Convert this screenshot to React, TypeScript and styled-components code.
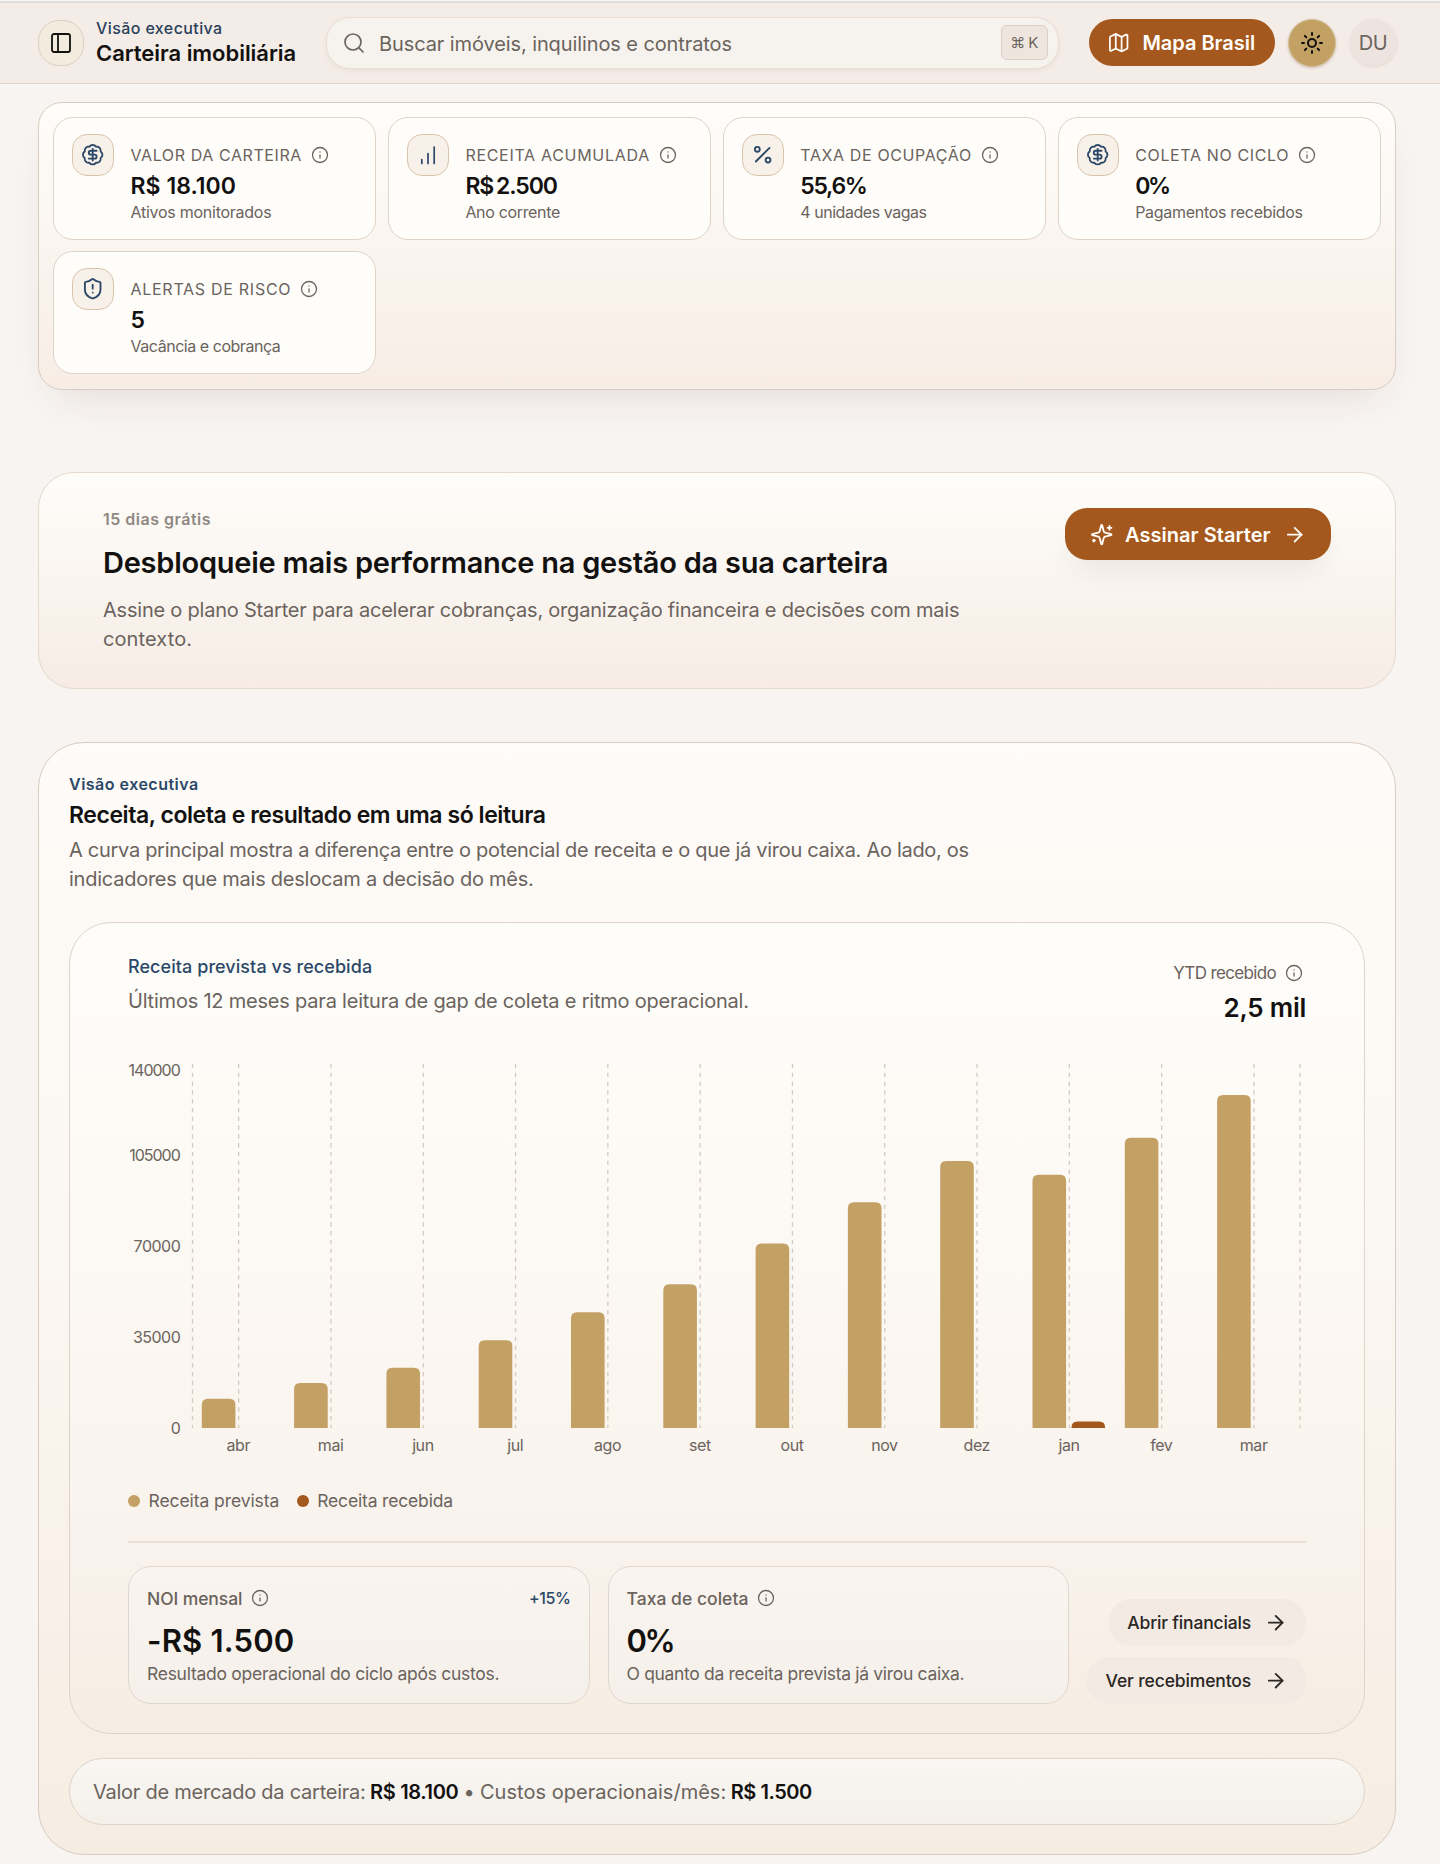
import React from 'react';
import styled, { createGlobalStyle, css } from 'styled-components';
import {
  ArrowRight,
  BadgeDollarSign,
  Info,
  Map as MapIcon,
  PanelLeft,
  Percent,
  Search,
  ShieldAlert,
  Sun,
} from 'lucide-react';

const color = {
  page: '#f8f4f1',
  ink: '#12110f',
  muted: '#6b635d',
  navy: '#2b4868',
  brand: '#a5581d',
  gold: '#c3a064',
  line: '#dfd4ca',
};

const GlobalStyle = createGlobalStyle`
  *, *::before, *::after { box-sizing: border-box; }
  body {
    margin: 0;
    background: ${color.page};
    color: ${color.ink};
    font-family: Inter, "Noto Sans", sans-serif;
    -webkit-font-smoothing: antialiased;
  }
  p, h1, h2, h3 { margin: 0; }
  button { font-family: inherit; cursor: pointer; }
`;

type Tracking = { $ls?: number; $ws?: number };

const tracking = css<Tracking>`
  letter-spacing: ${({ $ls = 0 }) => $ls}px;
  word-spacing: ${({ $ws = 0 }) => $ws}px;
  white-space: nowrap;
`;

const Page = styled.div`
  height: 1864px;
  overflow: hidden;
`;

const TopEdge = styled.div`
  height: 3px;
  background: #faf8f6;
  border-bottom: 2px solid #e0dedb;
`;

const Header = styled.header`
  display: flex;
  align-items: center;
  height: 81px;
  padding: 0 43.5px 1px 38px;
  background: #f4ece7;
  border-bottom: 1px solid #e1d4c9;
`;

const SidebarButton = styled.button`
  display: grid;
  place-items: center;
  width: 46px;
  height: 46px;
  padding: 0;
  border: 1px solid #dccfc3;
  border-radius: 21px;
  background: #f4ebdf;
  color: ${color.ink};
`;

const Brand = styled.div`
  width: 217.5px;
  margin: 0 12px;
  flex: none;
`;

const BrandEyebrow = styled.p<Tracking>`
  ${tracking}
  font-size: 16px;
  line-height: 22px;
  font-weight: 500;
  color: #2a415b;
`;

const BrandTitle = styled.h1<Tracking>`
  ${tracking}
  font-size: 22px;
  line-height: 29px;
  font-weight: 600;
`;

const SearchBox = styled.div`
  flex: 1;
  display: flex;
  align-items: center;
  height: 52px;
  padding: 0 10.5px 0 15.5px;
  border: 1px solid #eaddd1;
  border-radius: 24px;
  background: #f6f3ee;
  color: ${color.muted};
  box-shadow: 0 2px 4px rgba(80, 55, 35, 0.06);
`;

const SearchText = styled.span<Tracking>`
  ${tracking}
  flex: 1;
  margin-left: 13px;
  padding-top: 2px;
  font-size: 20px;
`;

const Kbd = styled.span`
  display: flex;
  align-items: center;
  justify-content: center;
  gap: 3px;
  width: 46.5px;
  height: 35px;
  border: 1px solid #dccfc6;
  border-radius: 6px;
  background: #eee5df;
  font-size: 15px;
`;

const MapButton = styled.button`
  display: flex;
  align-items: center;
  gap: 12px;
  width: 186px;
  height: 47px;
  margin-left: 30px;
  padding: 0 0 0 18px;
  border: 0;
  border-radius: 24px;
  background: ${color.brand};
  color: #fffdfa;
`;

const ActionLabel = styled.span<Tracking>`
  ${tracking}
  padding-top: 1px;
  font-size: 20px;
  font-weight: 600;
`;

const ThemeButton = styled.button`
  display: grid;
  place-items: center;
  width: 48px;
  height: 48px;
  margin-left: 13px;
  padding: 0;
  border: 1px solid #d3bd90;
  border-radius: 50%;
  background: ${color.gold};
  color: ${color.ink};
  box-shadow: 0 1px 3px rgba(60, 40, 20, 0.22);
`;

const Avatar = styled.div`
  display: grid;
  place-items: center;
  width: 47px;
  height: 47px;
  margin-left: 13.5px;
  padding-top: 1px;
  border-radius: 50%;
  background: #ede4df;
  color: ${color.muted};
  font-size: 20px;
  letter-spacing: -0.4px;
  box-shadow: 0 1px 3px rgba(60, 40, 20, 0.1);
`;

const Main = styled.main`
  padding: 18px 44px 0 38px;
`;

const KpiPanel = styled.section`
  display: grid;
  grid-template-columns: repeat(4, 1fr);
  grid-auto-rows: 122.6px;
  gap: 11.6px;
  padding: 14px 14px 15px;
  border: 1px solid #d9ccc2;
  border-radius: 24px;
  background: linear-gradient(180deg, #fefdfa 0%, #f7ede5 100%);
  box-shadow: 0 20px 42px -18px rgba(60, 45, 40, 0.13);
`;

const KpiCard = styled.article`
  display: flex;
  align-items: flex-start;
  gap: 16.5px;
  padding: 16px 18px;
  border: 1px solid #ddd3c9;
  border-radius: 20px;
  background: #fefdfa;
`;

const KpiIcon = styled.div`
  display: grid;
  place-items: center;
  flex: none;
  width: 42px;
  height: 42px;
  border: 1px solid #d9c4ab;
  border-radius: 15px;
  background: #f8f1e9;
  color: ${color.navy};
`;

const KpiBody = styled.div`
  padding-top: 5.5px;
`;

const LabelRow = styled.div`
  display: flex;
  align-items: center;
  gap: 9px;
  color: ${color.muted};
`;

const KpiLabel = styled.span<Tracking>`
  ${tracking}
  font-size: 16px;
  line-height: 30px;
`;

const KpiValue = styled.p<Tracking>`
  ${tracking}
  font-size: 23px;
  line-height: 33px;
  font-weight: 600;
`;

const KpiNote = styled.p<Tracking>`
  ${tracking}
  font-size: 16px;
  line-height: 19px;
  color: ${color.muted};
`;

const Promo = styled.section`
  display: flex;
  justify-content: space-between;
  align-items: flex-start;
  height: 217px;
  margin-top: 82.2px;
  padding: 35px 64px 0;
  border: 1px solid #e4d9ce;
  border-radius: 36px;
  background: linear-gradient(180deg, #fefdfa 0%, #f9f3ed 60%, #f6ece5 100%);
`;

const Eyebrow = styled.p<Tracking & { $tone: string }>`
  ${tracking}
  font-size: 16px;
  line-height: 22px;
  font-weight: 600;
  color: ${({ $tone }) => $tone};
`;

const PromoTitle = styled.h2<Tracking>`
  ${tracking}
  margin-top: 15px;
  font-size: 29px;
  line-height: 36px;
  font-weight: 600;
`;

const Paragraph = styled.p<{ $top: number }>`
  margin-top: ${({ $top }) => $top}px;
  color: ${color.muted};
`;

const Line = styled.span<Tracking>`
  ${tracking}
  display: block;
  font-size: 20px;
  line-height: 29.3px;
`;

const PromoButton = styled.button`
  display: flex;
  align-items: center;
  gap: 12px;
  height: 52.5px;
  padding: 0 25px;
  border: 0;
  border-radius: 22px;
  background: ${color.brand};
  color: #fffdfa;
  box-shadow: 0 16px 28px -10px rgba(60, 50, 50, 0.1);
`;

const Overview = styled.section`
  height: 1113px;
  margin-top: 53px;
  padding: 30px;
  border: 1px solid #d9ccc2;
  border-radius: 46px;
  background: linear-gradient(180deg, #fefbf8 0%, #fbf7f2 45%, #f8efe7 85%, #f6ede2 100%);
`;

const OverviewTitle = styled.h2<Tracking>`
  ${tracking}
  margin-top: 5px;
  font-size: 23px;
  line-height: 30px;
  font-weight: 600;
`;

const ChartCard = styled.section`
  height: 812px;
  margin-top: 28px;
  padding: 31.3px 58px 0;
  border: 1px solid ${color.line};
  border-radius: 42px;
  background: linear-gradient(180deg, #fefdfa 0%, #fdfaf5 30%, #f9f2ec 80%, #f6ede2 100%);
`;

const ChartHead = styled.div`
  display: flex;
  justify-content: space-between;
  height: 95px;
`;

const ChartTitle = styled.h3<Tracking>`
  ${tracking}
  font-size: 18px;
  line-height: 24px;
  font-weight: 500;
  color: ${color.navy};
`;

const ChartNote = styled.p<Tracking>`
  ${tracking}
  margin-top: 7.5px;
  font-size: 20px;
  line-height: 30px;
  color: ${color.muted};
`;

const Ytd = styled.div`
  display: flex;
  flex-direction: column;
  align-items: flex-end;
  padding-top: 8px;
`;

const YtdRow = styled(LabelRow)`
  padding-right: 3px;
`;

const YtdLabel = styled.span<Tracking>`
  ${tracking}
  font-size: 17px;
  line-height: 20px;
`;

const YtdValue = styled.p<Tracking>`
  ${tracking}
  margin-top: 9px;
  font-size: 26px;
  line-height: 32px;
  font-weight: 600;
`;

const ChartSvg = styled.svg`
  display: block;
  overflow: visible;
`;

const AxisLabel = styled.text<Tracking>`
  font-size: 16px;
  fill: ${color.muted};
  letter-spacing: ${({ $ls = -0.4 }) => $ls}px;
`;

const Legend = styled.div`
  display: flex;
  gap: 17.5px;
  margin-top: 19.2px;
`;

const LegendItem = styled.span<Tracking>`
  ${tracking}
  display: flex;
  align-items: center;
  gap: 8.5px;
  font-size: 17.5px;
  line-height: 24px;
  color: ${color.muted};
`;

const Dot = styled.i<{ $fill: string }>`
  width: 12px;
  height: 12px;
  border-radius: 50%;
  background: ${({ $fill }) => $fill};
`;

const StatRow = styled.div`
  display: grid;
  grid-template-columns: 461.5px 461.5px 1fr;
  gap: 18px;
  margin-top: 28px;
  padding-top: 23px;
  border-top: 2px solid #eadfd5;
`;

const StatCard = styled.article`
  height: 138px;
  padding: 19.5px 18px 0;
  border: 1px solid #e1d6cd;
  border-radius: 23px;
  background: linear-gradient(180deg, #f9f4ef 0%, #f5f0ea 100%);
`;

const StatHead = styled.div`
  display: flex;
  justify-content: space-between;
  align-items: center;
  height: 24px;
`;

const StatLabel = styled.span<Tracking>`
  ${tracking}
  font-size: 17.5px;
  font-weight: 500;
`;

const Delta = styled.span`
  font-size: 16px;
  line-height: 20px;
  font-weight: 500;
  letter-spacing: -0.4px;
  color: ${color.navy};
`;

const StatValue = styled.p<Tracking>`
  ${tracking}
  margin-top: 10.5px;
  font-size: 31px;
  line-height: 40px;
  font-weight: 600;
`;

const StatNote = styled.p<Tracking>`
  ${tracking}
  margin-top: 2px;
  font-size: 17.5px;
  line-height: 22px;
  color: ${color.muted};
`;

const Links = styled.div`
  display: flex;
  flex-direction: column;
  align-items: flex-end;
  justify-content: flex-end;
  gap: 11.5px;
`;

const LinkButton = styled.button`
  display: flex;
  align-items: center;
  gap: 12.5px;
  height: 46.5px;
  padding: 0 19px 0 18.5px;
  border: 0;
  border-radius: 22px;
  background: #f2eae3;
  color: #2a2724;
`;

const LinkLabel = styled.span<Tracking>`
  ${tracking}
  font-size: 17.5px;
  font-weight: 500;
`;

const Summary = styled.div`
  display: flex;
  align-items: center;
  height: 67px;
  margin-top: 24px;
  padding: 1px 23px 0;
  border: 1px solid ${color.line};
  border-radius: 34px;
  background: linear-gradient(180deg, #f9f6f3 0%, #f4f0e9 100%);
  font-size: 20px;
  color: ${color.muted};
`;

const SummaryText = styled.span<Tracking>`
  ${tracking}
`;

const SummaryDot = styled.span`
  width: 21.5px;
  text-align: center;
`;

const SummaryValue = styled.strong<Tracking>`
  ${tracking}
  margin-left: 4.5px;
  font-weight: 600;
  color: ${color.ink};
`;

const RisingBars = () => (
  <svg width="24" height="24" viewBox="0 0 24 24" fill="none" stroke="currentColor" strokeWidth="1.7" strokeLinecap="round">
    <path d="M5.8 20.5v-4M12 20.5v-10M18.2 20.5v-16.4" />
  </svg>
);

const SparkleIcon = () => (
  <svg width="23.4" height="23.4" viewBox="0 0 24 24" fill="none" stroke="currentColor" strokeWidth="1.9" strokeLinecap="round" strokeLinejoin="round">
    <path d="M9.94 15.5A2 2 0 0 0 8.5 14.06l-6.14-1.58a.5.5 0 0 1 0-.96L8.5 9.94A2 2 0 0 0 9.94 8.5l1.58-6.14a.5.5 0 0 1 .96 0l1.58 6.14a2 2 0 0 0 1.44 1.44l6.14 1.58a.5.5 0 0 1 0 .96l-6.14 1.58a2 2 0 0 0-1.44 1.44l-1.58 6.14a.5.5 0 0 1-.96 0z" />
    <path d="M20 3v4M22 5h-4M4 17v2M5 18H3" />
  </svg>
);

const Hint = () => <Info size={18} strokeWidth={1.7} />;

type Kpi = {
  icon: React.ReactNode;
  label: string;
  labelLs: number;
  value: string;
  valueLs?: number;
  valueWs?: number;
  note: string;
  noteLs: number;
};

const kpis: Kpi[] = [
  { icon: <BadgeDollarSign size={23.4} strokeWidth={1.9} />, label: 'VALOR DA CARTEIRA', labelLs: 0.59, value: 'R$ 18.100', valueLs: 0.05, note: 'Ativos monitorados', noteLs: -0.26 },
  { icon: <RisingBars />, label: 'RECEITA ACUMULADA', labelLs: 0.7, value: 'R$ 2.500', valueLs: -1.1, valueWs: -1.8, note: 'Ano corrente', noteLs: -0.33 },
  { icon: <Percent size={23.4} strokeWidth={1.9} />, label: 'TAXA DE OCUPAÇÃO', labelLs: 0.62, value: '55,6%', valueLs: -1.3, note: '4 unidades vagas', noteLs: -0.46 },
  { icon: <BadgeDollarSign size={23.4} strokeWidth={1.9} />, label: 'COLETA NO CICLO', labelLs: 0.64, value: '0%', valueLs: -2.4, note: 'Pagamentos recebidos', noteLs: -0.3 },
  { icon: <ShieldAlert size={23.4} strokeWidth={1.9} />, label: 'ALERTAS DE RISCO', labelLs: 0.72, value: '5', note: 'Vacância e cobrança', noteLs: -0.46 },
];

const months = [
  { name: 'abr', expected: 11300, received: 0 },
  { name: 'mai', expected: 17300, received: 0 },
  { name: 'jun', expected: 23200, received: 0 },
  { name: 'jul', expected: 33800, received: 0 },
  { name: 'ago', expected: 44500, received: 0 },
  { name: 'set', expected: 55300, received: 0 },
  { name: 'out', expected: 71000, received: 0 },
  { name: 'nov', expected: 86800, received: 0 },
  { name: 'dez', expected: 102700, received: 0 },
  { name: 'jan', expected: 97400, received: 2500 },
  { name: 'fev', expected: 111600, received: 0 },
  { name: 'mar', expected: 128000, received: 0 },
];

const plot = { left: 64.5, right: 1172.1, top: 13.9, bottom: 378.1, max: 140000 };
const band = (plot.right - plot.left) / months.length;
const barWidth = 33.6;

const yFor = (v: number) => plot.bottom - (v / plot.max) * (plot.bottom - plot.top);

const barPath = (x: number, v: number) => {
  const y = yFor(v);
  const r = Math.min(6, plot.bottom - y);
  return `M${x} ${plot.bottom}V${y + r}Q${x} ${y} ${x + r} ${y}H${x + barWidth - r}Q${x + barWidth} ${y} ${x + barWidth} ${y + r}V${plot.bottom}Z`;
};

const RevenueChart = () => {
  const grid = [plot.left, ...months.map((_, i) => plot.left + band * (i + 0.5)), plot.right];
  return (
    <ChartSvg width="1178" height="420" viewBox="0 0 1178 420">
      {grid.map((x) => (
        <line key={x} x1={x} x2={x} y1={plot.top} y2={plot.bottom} stroke="#d6cabf" strokeWidth="1.3" strokeDasharray="4.4 4.4" />
      ))}
      {months.map((m, i) => {
        const x = plot.left + band * i + 9.3;
        return (
          <g key={m.name}>
            <path d={barPath(x, m.expected)} fill={color.gold} />
            {m.received > 0 && <path d={barPath(x + barWidth + 5.4, m.received)} fill={color.brand} />}
            <AxisLabel x={plot.left + band * (i + 0.5) - 0.3} y="401.2" textAnchor="middle">
              {m.name}
            </AxisLabel>
          </g>
        );
      })}
      {[0, 35000, 70000, 105000, 140000].map((v) => (
        <AxisLabel key={v} $ls={v > 99999 ? -1 : -0.5} x={v > 99999 ? 51.8 : 52.3} y={Math.max(yFor(v), 19.6) + 6} textAnchor="end">
          {v}
        </AxisLabel>
      ))}
    </ChartSvg>
  );
};

export default function App() {
  return (
    <Page>
      <GlobalStyle />
      <TopEdge />
      <Header>
        <SidebarButton aria-label="Menu">
          <PanelLeft size={24} strokeWidth={1.8} />
        </SidebarButton>
        <Brand>
          <BrandEyebrow $ls={0.4}>Visão executiva</BrandEyebrow>
          <BrandTitle $ls={-0.04}>Carteira imobiliária</BrandTitle>
        </Brand>
        <SearchBox>
          <Search size={24} strokeWidth={1.7} />
          <SearchText $ls={-0.1}>Buscar imóveis, inquilinos e contratos</SearchText>
          <Kbd>
            <span>⌘</span>
            <span>K</span>
          </Kbd>
        </SearchBox>
        <MapButton>
          <MapIcon size={23.4} strokeWidth={1.8} />
          <ActionLabel $ls={-0.02}>Mapa Brasil</ActionLabel>
        </MapButton>
        <ThemeButton aria-label="Tema">
          <Sun size={24} strokeWidth={2} />
        </ThemeButton>
        <Avatar>DU</Avatar>
      </Header>

      <Main>
        <KpiPanel>
          {kpis.map((k) => (
            <KpiCard key={k.label}>
              <KpiIcon>{k.icon}</KpiIcon>
              <KpiBody>
                <LabelRow>
                  <KpiLabel $ls={k.labelLs}>{k.label}</KpiLabel>
                  <Hint />
                </LabelRow>
                <KpiValue $ls={k.valueLs} $ws={k.valueWs}>{k.value}</KpiValue>
                <KpiNote $ls={k.noteLs}>{k.note}</KpiNote>
              </KpiBody>
            </KpiCard>
          ))}
        </KpiPanel>

        <Promo>
          <div>
            <Eyebrow $tone="#8f8882" $ls={0.5}>15 dias grátis</Eyebrow>
            <PromoTitle $ls={-0.24}>Desbloqueie mais performance na gestão da sua carteira</PromoTitle>
            <Paragraph $top={15}>
              <Line $ls={-0.217}>Assine o plano Starter para acelerar cobranças, organização financeira e decisões com mais</Line>
              <Line $ls={0.1}>contexto.</Line>
            </Paragraph>
          </div>
          <PromoButton>
            <SparkleIcon />
            <ActionLabel $ls={0.05}>Assinar Starter</ActionLabel>
            <ArrowRight size={23.4} strokeWidth={1.9} />
          </PromoButton>
        </Promo>

        <Overview>
          <Eyebrow $tone={color.navy} $ls={0.49}>Visão executiva</Eyebrow>
          <OverviewTitle $ls={-0.44}>Receita, coleta e resultado em uma só leitura</OverviewTitle>
          <Paragraph $top={5.7}>
            <Line $ls={-0.297}>A curva principal mostra a diferença entre o potencial de receita e o que já virou caixa. Ao lado, os</Line>
            <Line $ls={-0.245}>indicadores que mais deslocam a decisão do mês.</Line>
          </Paragraph>

          <ChartCard>
            <ChartHead>
              <div>
                <ChartTitle $ls={0.06}>Receita prevista vs recebida</ChartTitle>
                <ChartNote $ls={-0.21}>Últimos 12 meses para leitura de gap de coleta e ritmo operacional.</ChartNote>
              </div>
              <Ytd>
                <YtdRow>
                  <YtdLabel $ls={-0.65}>YTD recebido</YtdLabel>
                  <Hint />
                </YtdRow>
                <YtdValue $ls={-0.25}>2,5 mil</YtdValue>
              </Ytd>
            </ChartHead>
            <RevenueChart />
            <Legend>
              <LegendItem $ls={-0.08}>
                <Dot $fill={color.gold} />
                Receita prevista
              </LegendItem>
              <LegendItem $ls={-0.17}>
                <Dot $fill={color.brand} />
                Receita recebida
              </LegendItem>
            </Legend>
            <StatRow>
              <StatCard>
                <StatHead>
                  <LabelRow>
                    <StatLabel $ls={-0.09}>NOI mensal</StatLabel>
                    <Hint />
                  </LabelRow>
                  <Delta>+15%</Delta>
                </StatHead>
                <StatValue $ls={0.2}>-R$ 1.500</StatValue>
                <StatNote $ls={-0.274}>Resultado operacional do ciclo após custos.</StatNote>
              </StatCard>
              <StatCard>
                <StatHead>
                  <LabelRow>
                    <StatLabel $ls={0.03}>Taxa de coleta</StatLabel>
                    <Hint />
                  </LabelRow>
                </StatHead>
                <StatValue $ls={-2.4}>0%</StatValue>
                <StatNote $ls={-0.323}>O quanto da receita prevista já virou caixa.</StatNote>
              </StatCard>
              <Links>
                <LinkButton>
                  <LinkLabel $ls={-0.16}>Abrir financials</LinkLabel>
                  <ArrowRight size={23.4} strokeWidth={1.9} />
                </LinkButton>
                <LinkButton>
                  <LinkLabel $ls={-0.13}>Ver recebimentos</LinkLabel>
                  <ArrowRight size={23.4} strokeWidth={1.9} />
                </LinkButton>
              </Links>
            </StatRow>
          </ChartCard>

          <Summary>
            <SummaryText $ls={-0.251}>Valor de mercado da carteira:</SummaryText>
            <SummaryValue $ls={-0.33}>R$ 18.100</SummaryValue>
            <SummaryDot>•</SummaryDot>
            <SummaryText $ls={0.03}>Custos operacionais/mês:</SummaryText>
            <SummaryValue $ls={-0.46}>R$ 1.500</SummaryValue>
          </Summary>
        </Overview>
      </Main>
    </Page>
  );
}
